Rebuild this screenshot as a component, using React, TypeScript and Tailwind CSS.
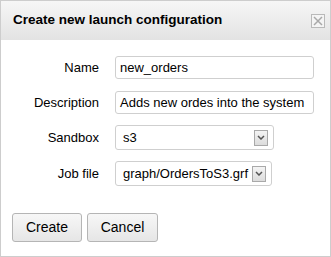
import React from 'react';

function SelectBox({ value, width }: { value: string; width: string }) {
  return (
    <div className={`flex h-[25px] ${width} items-center justify-between gap-[4px] rounded-[3px] border border-[#cfcfcf] bg-white pl-[7px] pr-[5px]`}>
      <span className="whitespace-nowrap">{value}</span>
      <span className="flex h-[16px] w-[14px] shrink-0 items-center justify-center border border-[#a9a9a9] bg-gradient-to-b from-[#f4f4f4] to-[#dcdcdc]">
        <svg width="8" height="5" viewBox="0 0 8 5">
          <path d="M1 1 L4 4 L7 1" fill="none" stroke="#555" strokeWidth="1.5" />
        </svg>
      </span>
    </div>
  );
}

export default function App() {
  const rows = [
    { label: 'Name', value: 'new_orders' },
    { label: 'Description', value: 'Adds new ordes into the system' },
  ];

  return (
    <div className="h-[257px] w-[331px] bg-white font-['Liberation_Sans',Arial,sans-serif] text-[13px] text-black">
      <div className="flex h-full flex-col border border-[#cdcdcd]">
        <div className="flex h-[39px] items-center justify-between bg-gradient-to-b from-[#f6f6f6] to-[#e3e3e3] pl-[12px] pr-[5px]">
          <span className="text-[13.5px] font-bold">Create new launch configuration</span>
          <span className="flex h-[14px] w-[14px] items-center justify-center border border-[#b9b9b9] bg-[#f4f4f4]">
            <svg width="10" height="10" viewBox="0 0 10 10">
              <path d="M1 1 L9 9 M9 1 L1 9" stroke="#a8a8a8" strokeWidth="1.5" />
            </svg>
          </span>
        </div>

        <div className="flex flex-col gap-[12px] pt-[16px]">
          {rows.map((r) => (
            <div key={r.label} className="flex items-center">
              <span className="w-[98px] text-right">{r.label}</span>
              <div className="ml-[16px] flex h-[23px] w-[199px] items-center whitespace-nowrap rounded-[3px] border border-[#cfcfcf] px-[4px]">
                {r.value}
              </div>
            </div>
          ))}
          <div className="-mt-[1px] flex items-center">
            <span className="w-[98px] text-right">Sandbox</span>
            <div className="ml-[16px]">
              <SelectBox value="s3" width="w-[159px]" />
            </div>
          </div>
          <div className="-mt-[1px] flex items-center">
            <span className="w-[98px] text-right">Job file</span>
            <div className="ml-[16px]">
              <SelectBox value="graph/OrdersToS3.grf" width="w-[157px]" />
            </div>
          </div>
        </div>

        <div className="flex gap-[5px] pl-[11px] pt-[27px]">
          <button className="h-[29px] w-[70px] rounded-[3px] border border-[#b5b5b5] bg-gradient-to-b from-[#f7f7f7] to-[#e6e6e6] text-[14px]">
            Create
          </button>
          <button className="h-[29px] w-[71px] rounded-[3px] border border-[#b5b5b5] bg-gradient-to-b from-[#f7f7f7] to-[#e6e6e6] text-[14px]">
            Cancel
          </button>
        </div>
      </div>
    </div>
  );
}
